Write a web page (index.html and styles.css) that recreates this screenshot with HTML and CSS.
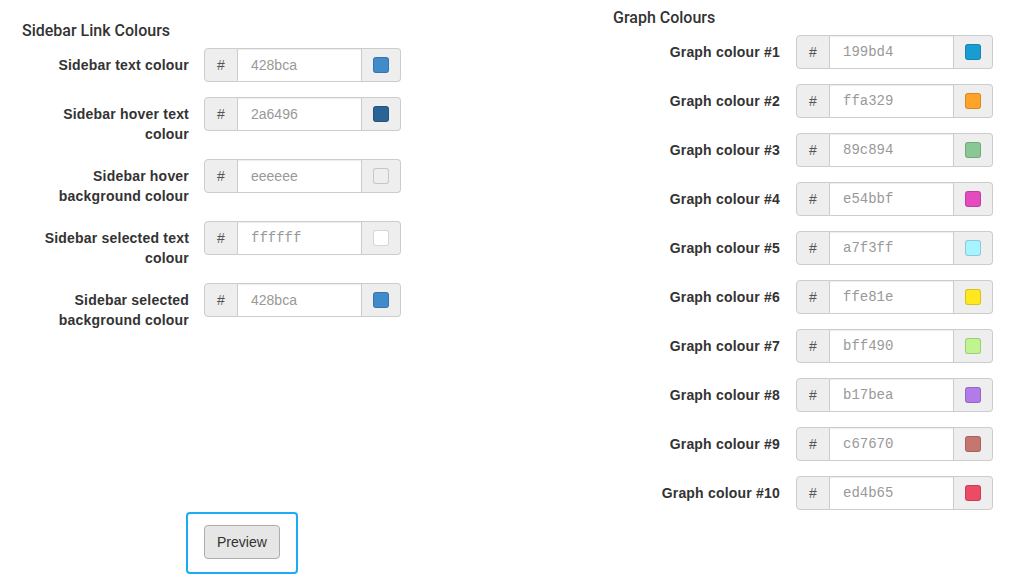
FILE: index.html
```html
<!DOCTYPE html>
<html lang="en">
<head>
    <meta charset="UTF-8">
    <meta name="viewport" content="width=device-width, initial-scale=1.0">
    <title>Theme Colours</title>
    <link rel="stylesheet" href="styles.css">
</head>
<body>
    <div class="page">
        <div class="columns">
            <section class="panel panel-sidebar">
                <h4>Sidebar Link Colours</h4>
                <div class="form-group">
                    <label class="control-label">Sidebar text colour</label>
                    <div class="input-group">
                        <span class="addon">#</span>
                        <input class="form-control" type="text" placeholder="428bca">
                        <span class="addon addon-swatch"><i class="swatch" style="background-color: #428bca"></i></span>
                    </div>
                </div>
                <div class="form-group">
                    <label class="control-label">Sidebar hover text colour</label>
                    <div class="input-group">
                        <span class="addon">#</span>
                        <input class="form-control" type="text" placeholder="2a6496">
                        <span class="addon addon-swatch"><i class="swatch" style="background-color: #2a6496"></i></span>
                    </div>
                </div>
                <div class="form-group">
                    <label class="control-label">Sidebar hover background colour</label>
                    <div class="input-group">
                        <span class="addon">#</span>
                        <input class="form-control" type="text" placeholder="eeeeee">
                        <span class="addon addon-swatch"><i class="swatch" style="background-color: #eeeeee"></i></span>
                    </div>
                </div>
                <div class="form-group">
                    <label class="control-label">Sidebar selected text colour</label>
                    <div class="input-group">
                        <span class="addon">#</span>
                        <input class="form-control mono" type="text" placeholder="ffffff">
                        <span class="addon addon-swatch"><i class="swatch" style="background-color: #ffffff"></i></span>
                    </div>
                </div>
                <div class="form-group">
                    <label class="control-label">Sidebar selected background colour</label>
                    <div class="input-group">
                        <span class="addon">#</span>
                        <input class="form-control" type="text" placeholder="428bca">
                        <span class="addon addon-swatch"><i class="swatch" style="background-color: #428bca"></i></span>
                    </div>
                </div>
            </section>

            <section class="panel panel-graph">
                <h4>Graph Colours</h4>
                <div id="graph-colours"></div>
            </section>
        </div>

        <div class="actions">
            <button class="btn" type="button">Preview</button>
        </div>
    </div>

    <script>
        var graphColours = ['199bd4', 'ffa329', '89c894', 'e54bbf', 'a7f3ff',
                            'ffe81e', 'bff490', 'b17bea', 'c67670', 'ed4b65'];

        var list = document.getElementById('graph-colours');
        graphColours.forEach(function(hex, i) {
            var group = document.createElement('div');
            group.className = 'form-group';
            group.innerHTML =
                '<label class="control-label">Graph colour #' + (i + 1) + '</label>' +
                '<div class="input-group">' +
                    '<span class="addon">#</span>' +
                    '<input class="form-control mono" type="text" placeholder="' + hex + '">' +
                    '<span class="addon addon-swatch"><i class="swatch" style="background-color: #' + hex + '"></i></span>' +
                '</div>';
            list.appendChild(group);
        });
    </script>
</body>
</html>
```

FILE: styles.css
```css
body {
    margin: 0;
    font-family: "Liberation Sans", Arial, sans-serif;
    font-size: 14px;
    line-height: 20px;
    color: #333;
    background-color: #fff;
}
.page {
    padding: 7px 0 0 22px;
}
.columns {
    display: grid;
    grid-template-columns: 591px 1fr;
    align-items: start;
}
.panel-sidebar {
    margin-top: 13px;
}
h4 {
    margin: 1px 0 7px;
    font-family: Roboto, "Liberation Sans", sans-serif;
    font-size: 16px;
    font-weight: 500;
    line-height: 20px;
    color: #333;
}
.form-group {
    display: grid;
    grid-template-columns: 167px 197px;
    column-gap: 15px;
    align-items: start;
    margin-bottom: 15px;
}
#graph-colours .form-group {
    column-gap: 16px;
}
#graph-colours .form-group:last-child {
    margin-bottom: 0;
}
.control-label {
    padding-top: 7px;
    text-align: right;
    font-weight: bold;
    letter-spacing: 0.2px;
}
.input-group {
    display: flex;
    height: 34px;
}
.addon {
    display: flex;
    align-items: center;
    justify-content: center;
    box-sizing: border-box;
    width: 34px;
    background-color: #eee;
    border: 1px solid #ccc;
    border-radius: 4px 0 0 4px;
    color: #555;
}
.addon-swatch {
    width: 39px;
    border-left: 0;
    border-radius: 0 4px 4px 0;
}
.form-control {
    flex: 1;
    min-width: 0;
    box-sizing: border-box;
    height: 34px;
    margin: 0;
    padding: 6px 12px 6px 13px;
    border: 1px solid #ccc;
    border-left: 0;
    border-radius: 0;
    font-family: "Liberation Sans", Arial, sans-serif;
    font-size: 14px;
    color: #555;
    background-color: #fff;
    box-shadow: inset 0 1px 1px rgba(0, 0, 0, 0.075);
    outline: none;
}
.form-control.mono {
    font-family: "Liberation Mono", "Courier New", monospace;
}
.form-control::placeholder {
    color: #999;
}
.swatch {
    display: block;
    box-sizing: border-box;
    width: 16px;
    height: 16px;
    border: 1px solid rgba(0, 0, 0, 0.16);
    border-radius: 3px;
}
.actions {
    display: inline-block;
    margin: 2px 0 0 164px;
    padding: 11px 16px 13px;
    border: 2px solid #1aacf7;
    border-radius: 4px;
}
.btn {
    display: block;
    height: 34px;
    padding: 6px 12px;
    font-family: "Liberation Sans", Arial, sans-serif;
    font-size: 14px;
    line-height: 20px;
    color: #333;
    background-color: #e6e6e6;
    border: 1px solid #adadad;
    border-radius: 4px;
    cursor: pointer;
}
```
